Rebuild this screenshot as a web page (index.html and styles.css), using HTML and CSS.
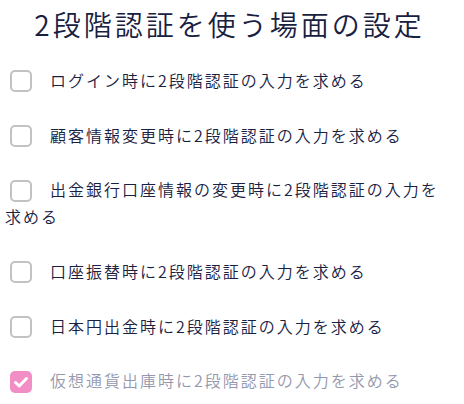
FILE: index.html
```html
<!DOCTYPE html>
<html lang="ja">
<head>
<meta charset="utf-8">
<link rel="stylesheet" href="styles.css">
</head>
<body>
<div class="page">
  <h1 class="title">2段階認証を使う場面の設定</h1>
  <ul class="options">
    <li class="option"><span class="box"></span>ログイン時に2段階認証の入力を求める</li>
    <li class="option"><span class="box"></span>顧客情報変更時に2段階認証の入力を求める</li>
    <li class="option"><span class="box"></span>出金銀行口座情報の変更時に2段階認証の入力を求める</li>
    <li class="option"><span class="box"></span>口座振替時に2段階認証の入力を求める</li>
    <li class="option"><span class="box"></span>日本円出金時に2段階認証の入力を求める</li>
    <li class="option disabled"><span class="box checked"><svg viewBox="0 0 22 22" width="22" height="22"><path d="M5.5 11.5 L9.2 15 L16.5 7.5" fill="none" stroke="#fff" stroke-width="3" stroke-linecap="round" stroke-linejoin="round"/></svg></span>仮想通貨出庫時に2段階認証の入力を求める</li>
  </ul>
</div>
</body>
</html>
```

FILE: styles.css
```css
html, body {
  margin: 0;
  padding: 0;
  background: #ffffff;
}
body {
  font-family: "Noto Sans CJK JP", "Noto Sans", sans-serif;
  color: #1e2648;
}
.page {
  width: 464px;
  height: 404px;
  overflow: hidden;
  padding: 0 10px 0 5px;
  box-sizing: border-box;
}
.title {
  margin: 0;
  padding-top: 5px;
  font-size: 28px;
  font-weight: 350;
  line-height: 38px;
  letter-spacing: 3px;
  text-align: center;
  color: #18203f;
}
.options {
  list-style: none;
  margin: 0;
  padding: 0;
  margin-top: 24px;
  display: flex;
  flex-direction: column;
  gap: 27.7px;
}
.option {
  font-size: 16px;
  font-weight: 350;
  line-height: 27px;
  letter-spacing: 2px;
  color: #18213f;
}
.option.disabled {
  color: #9498ae;
}
.box {
  display: inline-block;
  box-sizing: border-box;
  width: 22px;
  height: 22px;
  border: 2px solid #c2c2c2;
  border-radius: 5px;
  vertical-align: middle;
  margin: -3px 18px 0 5px;
}
.box.checked {
  border: none;
  background: #f28ec6;
}
.box.checked svg {
  display: block;
}
```
